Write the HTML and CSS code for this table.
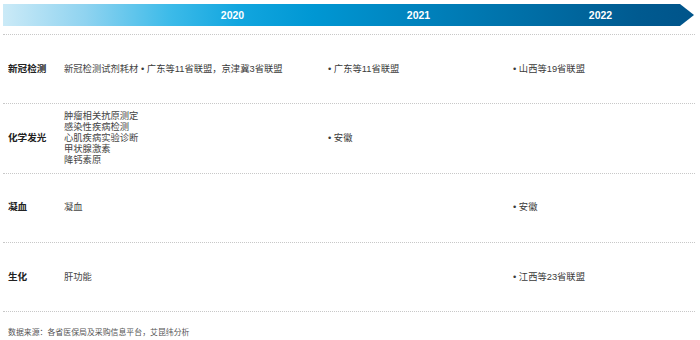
FILE: index.html
```html
<!DOCTYPE html>
<html lang="zh">
<head>
<meta charset="utf-8">
<link rel="stylesheet" href="styles.css">
</head>
<body>
<div class="page">
  <div class="banner">
    <span class="year y2020">2020</span>
    <span class="year y2021">2021</span>
    <span class="year y2022">2022</span>
  </div>
  <div class="table">
    <div class="row">
      <div class="label">新冠检测</div>
      <div class="items">新冠检测试剂耗材</div>
      <div class="cell">• 广东等11省联盟，京津冀3省联盟</div>
      <div class="cell">• 广东等11省联盟</div>
      <div class="cell">• 山西等19省联盟</div>
    </div>
    <div class="row">
      <div class="label">化学发光</div>
      <div class="items">肿瘤相关抗原测定<br>感染性疾病检测<br>心肌疾病实验诊断<br>甲状腺激素<br>降钙素原</div>
      <div class="cell"></div>
      <div class="cell">• 安徽</div>
      <div class="cell"></div>
    </div>
    <div class="row">
      <div class="label">凝血</div>
      <div class="items">凝血</div>
      <div class="cell"></div>
      <div class="cell"></div>
      <div class="cell">• 安徽</div>
    </div>
    <div class="row">
      <div class="label">生化</div>
      <div class="items">肝功能</div>
      <div class="cell"></div>
      <div class="cell"></div>
      <div class="cell">• 江西等23省联盟</div>
    </div>
  </div>
  <div class="note">数据来源：各省医保局及采购信息平台，艾昆纬分析</div>
</div>
</body>
</html>
```

FILE: styles.css
```css
html, body {
  margin: 0;
  padding: 0;
  background: #ffffff;
}
body {
  font-family: "Liberation Sans", Arial, "Noto Sans CJK SC", sans-serif;
  color: #3a3a3a;
}
.page {
  width: 700px;
  height: 340px;
  padding: 4px 0 0 3px;
  box-sizing: border-box;
}
.banner {
  width: 691px;
  height: 22px;
  display: grid;
  grid-template-columns: 138px 187px 185px 181px;
  align-items: center;
  background: linear-gradient(90deg, #cbeaf7 0%, #8fd3f0 12%, #3dbbe9 24%, #12a6df 34%, #0097d3 45%, #0085c0 58%, #0070a8 75%, #005a90 92%, #00548a 100%);
  clip-path: polygon(0 0, 677px 0, 691px 50%, 677px 100%, 0 100%);
}
.year {
  font-family: "Liberation Sans", Arial, sans-serif;
  font-weight: bold;
  font-size: 10.5px;
  color: #ffffff;
  justify-self: center;
  padding-right: 4px;
}
.y2020 { grid-column: 2; }
.y2021 { grid-column: 3; }
.y2022 { grid-column: 4; padding-right: 6px; }
.table {
  margin-top: 8px;
  width: 692px;
  border-top: 1px dotted #c8c8c8;
}
.row {
  display: grid;
  grid-template-columns: 61px 77px 187px 185px 182px;
  align-items: center;
  height: 68.3px;
  border-bottom: 1px dotted #c8c8c8;
  font-size: 9.3px;
  line-height: 10.8px;
}
.label {
  padding-left: 5px;
  font-weight: bold;
  color: #222222;
  font-size: 9.6px;
}
.items {
  color: #444444;
}
.cell {
  color: #3a3a3a;
  white-space: nowrap;
}
.note {
  margin-top: 14px;
  padding-left: 5px;
  font-size: 7.9px;
  color: #555555;
}
```
